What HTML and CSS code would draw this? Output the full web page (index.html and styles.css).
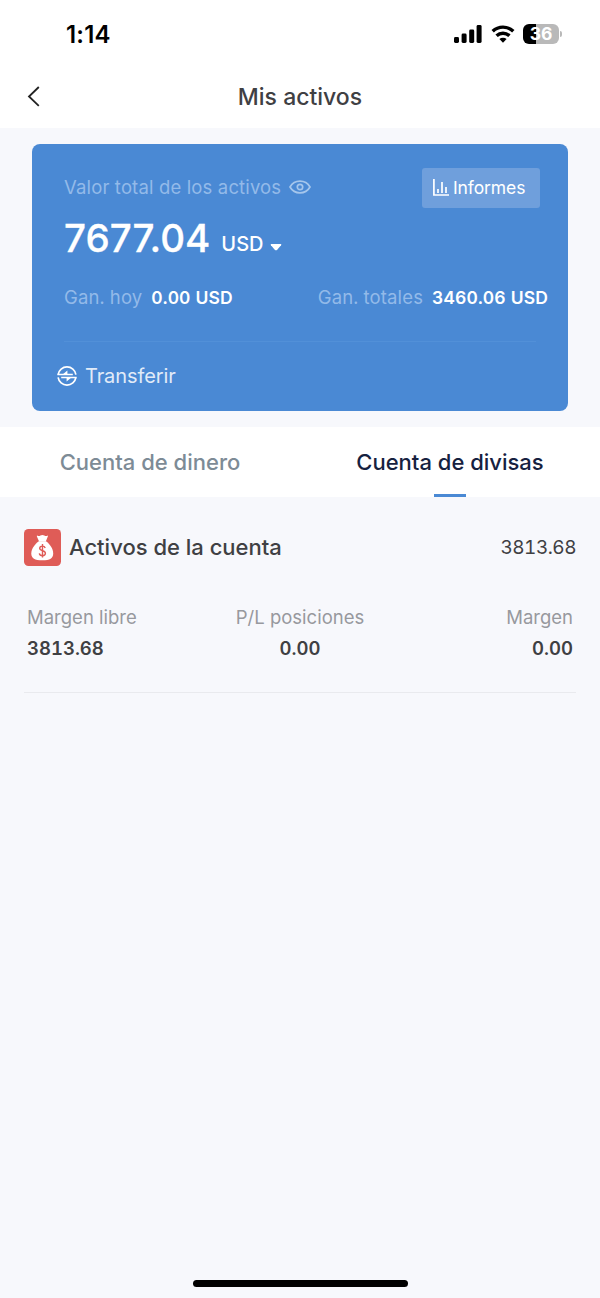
FILE: index.html
```
<!DOCTYPE html>
<html lang="es">
<head>
	<title>Mis activos</title>
	<meta charset="utf-8">
	<meta name="viewport" content="width=device-width, initial-scale=1">
	<link rel="stylesheet" href="styles.css">
</head>
<body>
    <div class="status-bar">
        <span class="time">1:14</span>
        <div class="status-icons">
            <svg class="signal" width="28" height="18" viewBox="0 0 28 18">
                <rect x="0" y="12" width="5" height="6" rx="1.4"/>
                <rect x="7.6" y="8.5" width="5" height="9.5" rx="1.4"/>
                <rect x="15.2" y="4.5" width="5" height="13.5" rx="1.4"/>
                <rect x="22.6" y="0" width="5" height="18" rx="1.4"/>
            </svg>
            <svg class="wifi" width="24" height="18" viewBox="0 0 24 18">
                <path d="M1.7 6.3a14.8 14.8 0 0 1 20.6 0" fill="none" stroke="#000" stroke-width="3.4"/>
                <path d="M5.6 10.8a9.2 9.2 0 0 1 12.8 0" fill="none" stroke="#000" stroke-width="3.4"/>
                <path d="M12 17.8l-3.6-3.7a5.2 5.2 0 0 1 7.2 0z"/>
            </svg>
            <div class="battery"><span>36</span></div>
            <i class="battery-cap"></i>
        </div>
    </div>

    <div class="nav">
        <svg class="back" width="14" height="22" viewBox="0 0 14 22">
            <path d="M12.8 1L3 10.5l9.8 9.3" fill="none" stroke="#222" stroke-width="1.8"/>
        </svg>
        <h1 class="page-title">Mis activos</h1>
    </div>

    <div class="card">
        <div class="card-top">
            <span class="card-label total-label">Valor total de los activos</span>
            <svg class="eye" width="22" height="14" viewBox="0 0 22 14" fill="none" stroke="#a5c6ec" stroke-width="1.7">
                <path d="M1 7C5.5-.8 16.500-.8 21 7 16.500 14.800 5.500 14.800 1 7z"/>
                <circle cx="11" cy="7" r="2.7"/>
            </svg>
            <a class="report-button">
                <svg width="16" height="17" viewBox="0 0 16 17" fill="none" stroke="#fff" stroke-width="1.7">
                    <path d="M.9 0v16H16M5 10v4M9 3v11M13 8v6"/>
                </svg>
                <span>Informes</span>
            </a>
        </div>
        <div class="balance">
            <span class="amount">7677.04</span>
            <span class="currency">USD</span>
            <svg class="caret" width="12" height="8" viewBox="0 0 12 8"><path d="M1.2 0h9.6q1 .3.3 1.200L7 5.900q-1 .8-2 0L.9 1.200Q.2.300 1.200 0z" fill="#fff"/></svg>
        </div>
        <div class="gains">
            <div><span class="card-label gain-label">Gan. hoy</span><b>0.00 USD</b></div>
            <div><span class="card-label gain-label">Gan. totales</span><b>3460.06 USD</b></div>
        </div>
        <div class="transfer">
            <svg width="20" height="20" viewBox="0 0 20 20" fill="none" stroke="#fff" stroke-width="1.7">
                <path d="M1.1 8.600A9 9 0 0 1 18.900 8.600M18.900 11.400A9 9 0 0 1 1.100 11.400"/>
                <path d="M.4 8.400h15.400M19.600 11.600H4.200" stroke-width="1.500"/>
                <path d="M5.600 8.400l4.800-3.800v3.800zM14.400 11.600l-4.800 3.800v-3.800z" fill="#fff" stroke="none"/>
            </svg>
            <span>Transferir</span>
        </div>
    </div>

    <div class="tabs">
        <a class="tab">Cuenta de dinero</a>
        <a class="tab active">Cuenta de divisas</a>
    </div>

    <div class="account">
        <div class="account-head">
            <svg class="bag" width="37" height="37" viewBox="0 0 37 37">
                <rect width="37" height="37" rx="4.5" fill="#df5c57"/>
                <path d="M13.200 6.500q1.800 1 3.200 0 2-.9 4 0 1.500 1 3.200 0 .6.300.2 1l-2 5h-6.700l-2.200-5q-.2-.8.300-1z" fill="#fff"/>
                <path d="M14.800 12.200h7.200c3.500 2.500 7.200 7.200 7.200 12.200 0 4.700-3.200 6.900-10.900 6.900S7.300 29.100 7.300 24.400c0-5 4-9.700 7.500-12.200z" fill="#fff"/>
                <path d="M21.200 19c-.5-1.500-1.500-1.900-2.800-1.900-1.700 0-2.700.8-2.700 2.200 0 3.200 5.700 1.700 5.700 5 0 1.600-1.200 2.400-2.900 2.400-1.600 0-2.900-.7-3.200-2.300M18.500 15v13.600" fill="none" stroke="#df5c57" stroke-width="1.4"/>
            </svg>
            <h2>Activos de la cuenta</h2>
            <span class="account-total">3813.68</span>
        </div>
        <div class="account-row">
            <div class="cell"><span>Margen libre</span><b>3813.68</b></div>
            <div class="cell"><span>P/L posiciones</span><b>0.00</b></div>
            <div class="cell"><span>Margen</span><b>0.00</b></div>
        </div>
    </div>

    <div class="home-indicator"></div>
</body>
</html>
```
FILE: styles.css
```
* {
    box-sizing: border-box;
}
body {
    margin: 0;
    min-height: 100vh;
    display: flex;
    flex-direction: column;
    background-color: #f7f8fc;
    font-family: Inter, "Liberation Sans", sans-serif;
    color: #3f4043;
}
.status-bar {
    height: 66px;
    padding: 2px 38px 0 66px;
    display: flex;
    align-items: center;
    justify-content: space-between;
    background-color: #fff;
}
.time {
    font-size: 24px;
    font-weight: 600;
    color: #000;
    letter-spacing: 0.2px;
}
.status-icons {
    display: flex;
    align-items: center;
}
.wifi {
    margin-left: 9px;
}
.battery {
    width: 36px;
    height: 20px;
    margin-left: 8px;
    border-radius: 6px;
    background: linear-gradient(to right, #000 36%, #b9b9b9 36%);
    color: #fff;
    font-size: 17.5px;
    font-weight: 700;
    line-height: 20px;
    text-align: center;
}
.battery-cap {
    width: 2px;
    height: 6px;
    margin-left: 1px;
    border-radius: 0 2px 2px 0;
    background-color: #b9b9b9;
}
.nav {
    height: 62px;
    padding: 0 26px;
    display: grid;
    grid-template-columns: 14px 1fr 14px;
    align-items: center;
    background-color: #fff;
}
.page-title {
    margin: 0;
    font-size: 23px;
    font-weight: 500;
    text-align: center;
}
.card {
    height: 267px;
    margin: 15.5px 32px 16.5px;
    padding: 24px 20px 0 32px;
    border-radius: 8px;
    background-color: #4a89d4;
    color: #fff;
}
.card-top {
    height: 40px;
    padding-right: 8px;
    display: flex;
    align-items: center;
}
.card-label {
    color: #93bae9;
}
.total-label {
    margin-top: -1px;
    font-size: 18.5px;
    letter-spacing: 0.15px;
}
.eye {
    margin-left: 8px;
    margin-top: -1px;
}
.report-button {
    width: 118px;
    height: 40px;
    margin-left: auto;
    padding-left: 11px;
    display: flex;
    align-items: center;
    gap: 4px;
    border-radius: 3px;
    background-color: #6f9fdc;
    font-size: 17.5px;
    letter-spacing: -0.1px;
}
.balance {
    height: 62px;
    display: flex;
    align-items: baseline;
}
.amount {
    font-size: 38.5px;
    font-weight: 500;
    line-height: 60px;
    -webkit-text-stroke: 0.3px #fff;
}
.currency {
    margin: 0 0 1px 11px;
    font-size: 20px;
    font-weight: 500;
    transform: translateY(-1px);
}
.caret {
    margin: 0 0 1px 6px;
}
.gains {
    height: 54px;
    display: flex;
    justify-content: space-between;
    align-items: center;
    font-size: 17.5px;
    font-variant-numeric: tabular-nums;
}
.gains b {
    margin-left: 9px;
    font-weight: 600;
    letter-spacing: 0.15px;
}
.gain-label {
    font-size: 18.5px;
    letter-spacing: 0.15px;
}
.transfer {
    height: 70px;
    margin: 17px 12px 0 0;
    display: flex;
    align-items: center;
    gap: 8px;
    border-top: 1px solid #5290d8;
    color: #e1ebf8;
    font-size: 20px;
    letter-spacing: -0.1px;
}
.transfer svg {
    margin-left: -7px;
}
.tabs {
    height: 70px;
    display: grid;
    grid-template-columns: 1fr 1fr;
    background-color: #fff;
}
.tab {
    display: flex;
    flex-direction: column;
    align-items: center;
    justify-content: space-between;
    color: #7d8b96;
    font-size: 22px;
    font-weight: 500;
    line-height: 70px;
}
.tab.active {
    color: #16213f;
}
.tab.active::after {
    content: "";
    width: 32px;
    height: 3px;
    margin-top: -3px;
    background-color: #4a89d4;
}
.account {
    margin: 0 24px;
    padding-top: 32px;
    border-bottom: 1px solid #e9eaee;
    height: 196px;
}
.account-head {
    display: flex;
    align-items: center;
}
.account-head h2 {
    margin: 0 0 1px 8px;
    font-size: 22px;
    font-weight: 500;
}
.account-total {
    margin-left: auto;
    font-size: 19px;
    font-variant-numeric: tabular-nums;
    letter-spacing: -0.5px;
}
.account-row {
    margin-top: 36px;
    padding: 0 3px;
    display: grid;
    grid-template-columns: 1fr 1fr 1fr;
}
.cell {
    display: flex;
    flex-direction: column;
    align-items: center;
    font-size: 18.5px;
    line-height: 31px;
}
.cell:first-child {
    align-items: flex-start;
}
.cell:last-child {
    align-items: flex-end;
}
.cell span {
    color: #97999e;
}
.cell b {
    font-weight: 600;
    font-variant-numeric: tabular-nums;
}
.home-indicator {
    width: 215px;
    height: 7px;
    margin: auto auto 11px;
    border-radius: 4px;
    background-color: #000;
}
```
